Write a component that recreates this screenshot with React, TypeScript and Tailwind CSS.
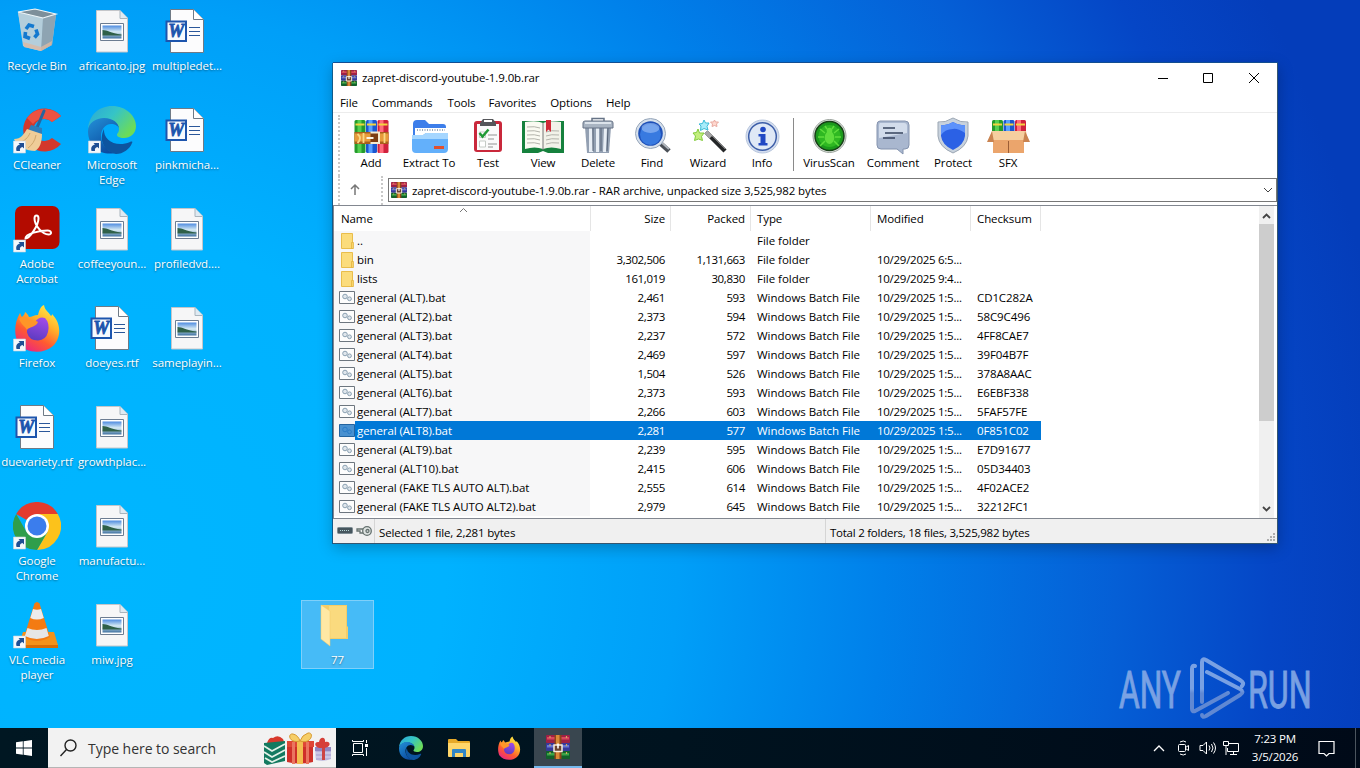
import type { ReactNode } from "react";

const files = [
  ["general (ALT).bat", "2,461", "593", "CD1C282A"],
  ["general (ALT2).bat", "2,373", "594", "58C9C496"],
  ["general (ALT3).bat", "2,237", "572", "4FF8CAE7"],
  ["general (ALT4).bat", "2,469", "597", "39F04B7F"],
  ["general (ALT5).bat", "1,504", "526", "378A8AAC"],
  ["general (ALT6).bat", "2,373", "593", "E6EBF338"],
  ["general (ALT7).bat", "2,266", "603", "5FAF57FE"],
  ["general (ALT8).bat", "2,281", "577", "0F851C02"],
  ["general (ALT9).bat", "2,239", "595", "E7D91677"],
  ["general (ALT10).bat", "2,415", "606", "05D34403"],
  ["general (FAKE TLS AUTO ALT).bat", "2,555", "614", "4F02ACE2"],
  ["general (FAKE TLS AUTO ALT2).bat", "2,979", "645", "32212FC1"],
];

const rows = [
  { name: "..", size: "", packed: "", type: "File folder", modified: "", sum: "" },
  { name: "bin", size: "3,302,506", packed: "1,131,663", type: "File folder", modified: "10/29/2025 6:5...", sum: "" },
  { name: "lists", size: "161,019", packed: "30,830", type: "File folder", modified: "10/29/2025 9:4...", sum: "" },
  ...files.map(([name, size, packed, sum]) => ({
    name, size, packed, type: "Windows Batch File", modified: "10/29/2025 1:5...", sum,
  })),
];

/* ---------- desktop icons ---------- */

function Shortcut() {
  return (
    <g>
      <path d="M.5 35h12v12H.5z" fill="#f4f8fb" stroke="#c9d5de" strokeWidth=".6" />
      <path d="M3.500 45c-1-4 1-6 3.500-6.500L5.500 37H11v5.500L9.500 41c-2 .5-3 1.500-2.500 4z" fill="#1f4f94" />
    </g>
  );
}

function RecycleIcon() {
  return (
    <svg width="48" height="48" viewBox="0 0 48 48">
      <path d="M5 5l17-3 21 5-4 31-11 6-17-4z" fill="#b9cfda" opacity=".9" />
      <path d="M5 5l25 6-2 33-18-5z" fill="#b4cedb" />
      <path d="M30 11l13-4-4 31-11 6z" fill="#8ea4b2" />
      <path d="M5 5l17-3 21 5-13 4z" fill="#7d8f9a" stroke="#eef6f9" strokeWidth="1.200" />
      <path d="M10 35l18 5 11-6-.5 4-10.500 6-17-4z" fill="#dcb9a2" opacity=".8" />
      <g fill="none" stroke="#1479cf" strokeWidth="3.600">
        <path d="M13 22l3-4 5 1.500" />
        <path d="M23 22.500l1.500 4.500-3 3.500" />
        <path d="M17 31.500l-5-2 .5-4.500" />
      </g>
    </svg>
  );
}

function CCleanerIcon() {
  return (
    <svg width="48" height="48" viewBox="0 0 48 48">
      <path d="M48 10A21.500 21.500 0 1 0 48 38l-9-6a11 11 0 1 1 0-16z" fill="#d3382b" />
      <path d="M48 10A22 22 0 0 0 14 12l6 6c6-7 14-6 19-2z" fill="#ec5242" />
      <path d="M31 5l-8 19" stroke="#27659f" strokeWidth="3" strokeLinecap="round" />
      <path d="M18 19l11 3v7l-14-4z" fill="#2e7dbb" />
      <path d="M14 23l15 5c0 8-2 14-7 17-8 0-18-4-21-12 7 0 10-5 13-10z" fill="#efcd98" />
      <path d="M17 27c-2 5-6 8-9 9M23 29c-1 6-4 10-8 13" stroke="#d0a86d" fill="none" />
      <Shortcut />
    </svg>
  );
}

function EdgeLogo({ size }: { size: number }) {
  return (
    <svg width={size} height={size} viewBox="0 0 48 48">
      <defs>
        <linearGradient id="edgeTop" x1="0" y1="0" x2="1" y2=".6">
          <stop offset="0" stopColor="#2ba6d8" />
          <stop offset=".5" stopColor="#35c4c7" />
          <stop offset="1" stopColor="#6ddc57" />
        </linearGradient>
        <linearGradient id="edgeBody" x1="0" y1="0" x2=".6" y2="1">
          <stop offset="0" stopColor="#2391d8" />
          <stop offset="1" stopColor="#0b4a9f" />
        </linearGradient>
      </defs>
      <path d="M0 23C1 9 11 0 24 0c14 0 24 10 24 20 0 8-6 12-12 12-5 0-7-2-7-3 0-2 2-2 2-6 0-5-6-10-14-10C8 13 2 17 0 23z" fill="url(#edgeTop)" />
      <path d="M0 25c0-8 8-13 16-13 9 0 15 5 15 11 0-3-4-5-8-5-6 0-10 6-10 12 0 9 7 16 14 17C13 50 0 41 0 25z" fill="url(#edgeBody)" />
      <path d="M16 23c-6 12 1 23 12 25 7 0 14-5 16-11 1-1 0-2-2-1-14 6-27-2-26-13z" fill="#0d549f" />
    </svg>
  );
}

function EdgeIcon() {
  return (
    <div className="grid">
      <div className="col-start-1 row-start-1"><EdgeLogo size={48} /></div>
      <svg className="col-start-1 row-start-1" width="48" height="48"><Shortcut /></svg>
    </div>
  );
}

function AcrobatIcon() {
  return (
    <svg width="48" height="48" viewBox="0 0 48 48">
      <rect x="2" y="1" width="44.500" height="43" rx="7" fill="#b30b00" />
      <path d="M12.500 33.500c4 0 13-13 13-20 0-4-4-4-4 0 0 7 8 16 14 16 4 0 3-4-1-4-7 0-22.500 3-22 8z" fill="none" stroke="#fff" strokeWidth="2" />
      <Shortcut />
    </svg>
  );
}

function FirefoxLogo({ size }: { size: number }) {
  return (
    <svg width={size} height={size} viewBox="0 0 48 48">
      <defs>
        <linearGradient id="ffBody" x1=".8" y1="0" x2=".2" y2="1">
          <stop offset="0" stopColor="#fff04a" />
          <stop offset=".35" stopColor="#ffb02a" />
          <stop offset=".65" stopColor="#ff5a30" />
          <stop offset="1" stopColor="#e8208a" />
        </linearGradient>
        <linearGradient id="ffGlobe" x1=".6" y1="0" x2=".3" y2="1">
          <stop offset="0" stopColor="#a04be8" />
          <stop offset="1" stopColor="#5b3bc0" />
        </linearGradient>
      </defs>
      <path d="M7 9c1 2 1 3 2 4 1-1 3-3 3-5 2 1 3 3 4 5 3 0 5-2 9-2 1-5 3-9 6-10 1 6 5 7 7 11 1-1 1-1 1-2 10 10 9 24 1 32-10 9-28 7-35-3C1 31 1 19 7 9z" fill="url(#ffBody)" />
      <path d="M14 22l8-4q4-6 10-4 5 5 3 14-2 8-10 8.500-9 0-11-8z" fill="url(#ffGlobe)" />
      <path d="M6 15c5-4 8-1 11 2 3-1 7 0 8 1-1 3-4 4-6 5-2 1-4 1-5 3-1-3-5-4-8-11z" fill="#ff9627" />
    </svg>
  );
}

function FirefoxIcon() {
  return (
    <div className="grid">
      <div className="col-start-1 row-start-1"><FirefoxLogo size={48} /></div>
      <svg className="col-start-1 row-start-1" width="48" height="48"><Shortcut /></svg>
    </div>
  );
}

function ChromeIcon() {
  return (
    <svg width="48" height="48" viewBox="0 0 48 48">
      <path d="M24 24L3.200 12A24 24 0 0 1 44.800 12z" fill="#e33b2e" />
      <path d="M24 24V12h20.800A24 24 0 0 1 24 48l10.400-18z" fill="#fcc21b" />
      <path d="M24 24l10.400 6L24 48A24 24 0 0 1 3.200 12l10.400 18z" fill="#2f9e4b" />
      <circle cx="24" cy="24" r="12" fill="#fff" />
      <circle cx="24" cy="24" r="9.500" fill="#3b7ded" />
      <Shortcut />
    </svg>
  );
}

function VlcIcon() {
  return (
    <svg width="48" height="48" viewBox="0 0 48 48">
      <path d="M10 31h31l4 13v3H6v-3z" fill="#f4921a" />
      <path d="M6 44h39v3H6z" fill="#d96d05" />
      <path d="M21.500 2.500q2.500-3 5 0L37 36q-13 8-26 0z" fill="#f47b12" />
      <path d="M20 8q4 1.500 8 0l2.800 9q-7 3-13.500 0z" fill="#ececec" />
      <path d="M14.500 27q9.500 4 19 0l2.300 8q-12 6-24 0z" fill="#e6e6e6" />
      <Shortcut />
    </svg>
  );
}

function WordIcon() {
  return (
    <svg width="48" height="48" viewBox="0 0 48 48">
      <path d="M7.500 2.500h23l10 10v33h-33z" fill="#fcfcfd" stroke="#6f7a86" />
      <path d="M30.500 2.500v10h10" fill="#fff" stroke="#6f7a86" />
      <path d="M26 20.500h11M26 24.500h11M26 28.500h11" stroke="#2b579a" />
      <rect x="2.500" y="13.500" width="21.500" height="21.500" fill="#1d55ad" />
      <rect x="4.500" y="15.500" width="17.500" height="17.500" fill="#f7fafe" />
      <text x="13.200" y="30" textAnchor="middle" fontFamily="Liberation Serif, serif" fontWeight="700" fontStyle="italic" fontSize="18" fill="#1d55ad" stroke="#1d55ad" strokeWidth=".8">W</text>
    </svg>
  );
}

function ImageIcon() {
  return (
    <svg width="48" height="48" viewBox="0 0 48 48">
      <defs>
        <linearGradient id="photoSky" x1="0" y1="0" x2="0" y2="1">
          <stop offset="0" stopColor="#4d8be0" />
          <stop offset=".5" stopColor="#d8ecf4" />
          <stop offset="1" stopColor="#3d70a0" />
        </linearGradient>
      </defs>
      <path d="M8.500 3.500H32l7.500 7.500v34h-31z" fill="#f6f6f7" stroke="#c4c6ca" />
      <path d="M32 3.500v8h7.500" fill="#dfeaf2" stroke="#a9b4bd" />
      <path d="M12.500 16.500h23v17h-23z" fill="#fff" stroke="#6c7c91" />
      <path d="M14.500 18.500h19v13h-19z" fill="url(#photoSky)" />
      <path d="M14.500 23c5 0 8 3 19 4.500v1h-19z" fill="#2f6048" />
    </svg>
  );
}

function DesktopItem({ icon, label }: { icon: ReactNode; label: string }) {
  return (
    <div className="flex h-[99px] w-[75px] flex-col items-center pt-[7px]">
      <div className="h-[51px]">{icon}</div>
      <div className="w-[76px] pl-px text-center leading-[15px] tracking-[-0.05px] whitespace-pre text-white [text-shadow:0_1px_2px_rgba(0,0,0,.45)]">{label}</div>
    </div>
  );
}

/* ---------- archiver icons ---------- */

function RarIcon({ size }: { size: number }) {
  return (
    <svg width={size} height={size} viewBox="0 0 24 24">
      <rect x="0" y="0" width="24" height="8" rx="1" fill="#9e2145" />
      <rect x="1" y="2" width="22" height="2.500" fill="#d8485e" />
      <rect x="0" y="8" width="24" height="8" rx="1" fill="#37399a" />
      <rect x="1" y="10" width="22" height="2.500" fill="#6878d4" />
      <rect x="0" y="16" width="24" height="8" rx="1" fill="#12612b" />
      <rect x="1" y="18" width="22" height="2.500" fill="#3ba548" />
      <path d="M4 1v22M20.500 1v22" stroke="#d3a85c" strokeWidth="1.200" strokeDasharray="2 6" />
      <rect x="8.500" y="0" width="7" height="24" fill="#8f4519" />
      <rect x="10" y="0" width="3.500" height="24" fill="#d98a38" />
      <path d="M8 10h8v6.500H8z" fill="#6b4330" stroke="#f6ecdc" strokeWidth="1.500" />
      <path d="M12 8.500v5" stroke="#fff" strokeWidth="1.600" />
    </svg>
  );
}

function Books({ h }: { h: number }) {
  return (
    <g>
      <rect x="0" y="0" width="11" height={h} rx="1.500" fill="#249b2c" />
      <rect x="3" y="0" width="4" height={h} fill="#54cf50" />
      <rect x="11.500" y="0" width="11" height={h} rx="1.500" fill="#1b57cf" />
      <rect x="14" y="0" width="4" height={h} fill="#58a0ff" />
      <rect x="23" y="0" width="11" height={h} rx="1.500" fill="#d0213d" />
      <rect x="25" y="0" width="4" height={h} fill="#ff6b7c" />
      <path d="M1 4.500h9M12.500 4.500h9M24 4.500h9" stroke="#f3d33f" strokeWidth="1.800" />
    </g>
  );
}

const tools: { label: string; width: string; art: ReactNode }[] = [
  {
    label: "Add", width: "w-[50px]",
    art: (
      <g transform="translate(1.500 2)">
        <Books h={33} />
        <path d="M0 12h34v12H0z" fill="#a9601c" />
        <path d="M0 13.500h34v8H0z" fill="#e79b3a" />
        <path d="M3 14q5 4 0 9M9 13v10M30 13v10" stroke="#f9d985" strokeWidth="1.800" fill="none" />
        <path d="M16 12.500h8.500v10.500H16" fill="#7d3c12" stroke="#f6ead0" strokeWidth="2" />
        <path d="M12 18h7" stroke="#f9f5e9" strokeWidth="2" />
      </g>
    ),
  },
  {
    label: "Extract To", width: "w-[66px]",
    art: (
      <g transform="translate(1 0)">
        <path d="M1 6q0-4 4-4h8l4 4h14q3 0 3 3v10H1z" fill="#3d7eea" />
        <path d="M3 10h31v10H3z" fill="#fff" />
        <path d="M5 12h28" stroke="#9aa9bd" strokeDasharray="1 1.500" strokeWidth="2" />
        <path d="M0 17h11l3-2h22v16q0 4-4 4H4q-4 0-4-4z" fill="#63b0fb" />
        <path d="M0 17h11l3-2h22v6H0z" fill="#a5d6ff" />
        <rect x="22" y="28" width="10" height="3" fill="#e0502e" />
      </g>
    ),
  },
  {
    label: "Test", width: "w-[52px]",
    art: (
      <g>
        <rect x="4" y="3" width="28" height="31" rx="3" fill="#c9283b" />
        <path d="M7 6h22v26H7z" fill="#fafafa" />
        <path d="M10 5l3-4h10l3 4v3H10z" fill="#55565a" />
        <path d="M14 3h8" stroke="#fff" strokeWidth="2" />
        <path d="M9.500 14h6v5.500h-6zM9.500 23h6v6h-6z" fill="#fff" stroke="#c5cbc6" />
        <path d="M9.500 15l3 3.500 6-7" fill="none" stroke="#209a36" strokeWidth="2.500" />
        <path d="M18 17h9M18 21h6M18 26h9M18 29h5" stroke="#929292" />
      </g>
    ),
  },
  {
    label: "View", width: "w-[58px]",
    art: (
      <g>
        <path d="M-3 3h42v32H23l-5-2-5 2H-3z" fill="#16813d" />
        <path d="M0 4q12-2 18 1v26q-8-3-18 0z" fill="#fafaf2" />
        <path d="M36 4q-12-2-18 1v26q8-3 18 0z" fill="#f2f2e9" />
        <path d="M2 9q8-1 13 1M2 13q8-1 13 1M2 17q8-1 13 1M2 21q8-1 13 1M2 25q8-1 13 1M21 14q5-2 13-1M21 18q5-2 13-1M21 22q5-2 13-1M21 26q5-2 13-1" fill="none" stroke="#b3b3ab" />
        <path d="M18 5v27" stroke="#777" />
        <path d="M21 2h5v12l-2.500-2.500L21 14z" fill="#d02936" />
      </g>
    ),
  },
  {
    label: "Delete", width: "w-[52px]",
    art: (
      <g>
        <path d="M5 9h26l-2 26H7z" fill="#93a0b2" />
        <path d="M9 10h3l1 24H9zM16 10h3v24h-3zM24 10h3l-1 24h-3z" fill="#e8eef5" />
        <path d="M13 10v23M21 10v23M28 10l-1 23" stroke="#566377" />
        <path d="M3 5q0-2 2-2h26q2 0 2 2v5H3z" fill="#a9b4c2" stroke="#667386" />
        <path d="M5 5h26" stroke="#eef3f8" strokeWidth="1.500" />
        <path d="M12 3V.500h12V3" fill="none" stroke="#667386" strokeWidth="1.500" />
      </g>
    ),
  },
  {
    label: "Find", width: "w-[56px]",
    art: (
      <g>
        <path d="M26 25l9 8" stroke="#4a4f56" strokeWidth="5" />
        <path d="M27 24l8 7" stroke="#aeb4bb" strokeWidth="2" />
        <circle cx="16.500" cy="15.500" r="15" fill="#d6e0ec" stroke="#99a8bb" />
        <circle cx="16.500" cy="15.500" r="12.300" fill="#1e50b8" />
        <circle cx="16.500" cy="16.500" r="10.500" fill="#387ae0" />
        <ellipse cx="16.500" cy="10" rx="9" ry="5" fill="#91b8f3" opacity=".7" />
      </g>
    ),
  },
  {
    label: "Wizard", width: "w-[56px]",
    art: (
      <g>
        <path d="M16 14l19 19" stroke="#242628" strokeWidth="4.500" />
        <path d="M16 14l5 5" stroke="#a6a6a6" strokeWidth="4.500" />
        <path d="M22 18l13 13" stroke="#777" />
        <path d="M14 2l1.500 3 3.500 0-2 3.500 1 3.500-4-1.500-3.500 2 .5-4.500L9 6l3.500-.5z" fill="#a8ecfa" stroke="#3bbbd6" />
        <path d="M8 11l1.500 4H14l-2.500 3.500 1 4-4-1.500-4 1.500 1-4.500L3 15l3.500-.5z" fill="#c2ee7d" stroke="#82cb3c" />
        <path d="M24.500 2l1 2h3l-2 2 .5 2.500-2.500-1-2.500 1L22.500 6l-2-2h3z" fill="#ffd8cf" stroke="#e8a99f" />
      </g>
    ),
  },
  {
    label: "Info", width: "w-[52px]",
    art: (
      <g transform="translate(.5 0)">
        <circle cx="18" cy="18.500" r="16.500" fill="#d3ddef" stroke="#b8c6dd" />
        <circle cx="18" cy="18.500" r="13.800" fill="#dfe8f6" stroke="#3d5ea8" strokeWidth="1.500" />
        <circle cx="18.500" cy="11.500" r="2.800" fill="#2148c4" />
        <path d="M14 16h7v9h2v2.500h-9V25h2v-6.500h-2z" fill="#2148c4" />
      </g>
    ),
  },
];

const extraTools: typeof tools = [
  {
    label: "VirusScan", width: "w-[58px]",
    art: (
      <g>
        <circle cx="18.500" cy="18" r="16.500" fill="#e1e6e1" stroke="#9ba39c" />
        <circle cx="18.500" cy="18" r="14.500" fill="#1c9a1c" stroke="#183f18" strokeWidth="1.500" />
        <circle cx="18.500" cy="18" r="11" fill="#2fb822" />
        <g stroke="#5fdc3d" strokeWidth="1.500" fill="none">
          <path d="M14 15l-5-4M23 15l5-4M13 19H7M24 19h6M14 23l-5 5M23 23l5 5M16 11l-2-3M21 11l2-3" />
        </g>
        <ellipse cx="18.500" cy="19.500" rx="4.800" ry="6.500" fill="#5fdc3d" />
        <circle cx="18.500" cy="12.500" r="2.800" fill="#5fdc3d" />
      </g>
    ),
  },
  {
    label: "Comment", width: "w-[70px]",
    art: (
      <g>
        <path d="M5 3h25q4 0 4 4v20q0 4-4 4h-2v5l-6-5H6q-4 0-4-4V7q0-4 3-4z" fill="#a9b7cf" stroke="#8493ae" />
        <path d="M5 5h24q3 0 3 3v7L4 20V8q0-3 1-3z" fill="#d2dceb" />
        <path d="M8 10h12M10 15h18M8 20h12" stroke="#36435d" strokeWidth="1.700" />
      </g>
    ),
  },
  {
    label: "Protect", width: "w-[50px]",
    art: (
      <g>
        <path d="M18 0q8 5 15 4v14q-1 11-15 17Q4 29 3 18V4q7 1 15-4z" fill="#c8d2dd" stroke="#9ba6b3" />
        <path d="M18 4q6 4 12 3v11q-1 9-12 14Q7 27 6 18V7q6 1 12-3z" fill="#2b61e5" />
        <path d="M18 4q6 4 12 3v8q-8-5-12-4-8 0-12 6V7q6 1 12-3z" fill="#5d92fb" />
      </g>
    ),
  },
  {
    label: "SFX", width: "w-[60px]",
    art: (
      <g>
        <g transform="translate(2 2)"><Books h={15} /></g>
        <path d="M3 17h31v18H3z" fill="#eba56c" />
        <path d="M2 13h34l2 9H0z" fill="#f5cf9f" />
        <path d="M-3 24l5-11 2 11zM40 24l-5-11-2 11z" fill="#c98350" />
        <path d="M18.500 23v12" stroke="#9c5d35" />
      </g>
    ),
  },
];

function Tool({ label, width, art }: { label: string; width: string; art: ReactNode }) {
  return (
    <div className={`flex ${width} shrink-0 flex-col items-center`}>
      <svg width="36" height="36" viewBox="0 0 36 36" className="overflow-visible">{art}</svg>
      <span className="mt-px leading-4 whitespace-nowrap">{label}</span>
    </div>
  );
}

function FolderSmall() {
  return (
    <svg width="16" height="18" viewBox="0 0 16 18">
      <path d="M2.500 1.500h11v15h-11z" fill="#fbdc7c" stroke="#e9bd4b" />
      <path d="M12.500 10.500h2v6h-2z" fill="#f9d467" stroke="#dfb03c" strokeWidth=".7" />
    </svg>
  );
}

function BatSmall({ selected }: { selected: boolean }) {
  return (
    <svg width="16" height="16" viewBox="0 0 16 16">
      <path d="M.5 1.500h15v12H.5z" fill={selected ? "#4a91d0" : "#fdfdfd"} stroke={selected ? "#23639f" : "#6d767f"} />
      <g fill={selected ? "none" : "#dfe6ec"} stroke={selected ? "#2a7cc9" : "#8ba1b2"}>
        <circle cx="6" cy="6.500" r="2.300" />
        <circle cx="10.500" cy="8.800" r="1.900" />
      </g>
    </svg>
  );
}

function ArchiveWindow() {
  return (
    <div className="absolute top-[63px] left-[333px] flex h-[481px] w-[945px] flex-col border-r border-b border-[#35566f] bg-white text-black shadow-[0_4px_14px_rgba(0,0,0,.25),0_-1px_0_#14539c,-1px_0_0_#14679c]">
      <div className="flex h-[29px] shrink-0 items-center pl-2">
        <RarIcon size={16} />
        <span className="ml-[5px] grow">zapret-discord-youtube-1.9.0b.rar</span>
        <div className="mr-[17px] flex w-[103px] items-center">
          <svg width="12" height="12"><path d="M1 6.500h10" stroke="#000" /></svg>
          <svg className="ml-[33px]" width="12" height="12"><path d="M1.500 1.500h9v9h-9z" fill="none" stroke="#000" /></svg>
          <svg className="ml-auto" width="12" height="12"><path d="M1 1l10 10M11 1L1 11" stroke="#000" /></svg>
        </div>
      </div>
      <div className="flex h-[21px] shrink-0 items-center gap-[14px] border-b border-[#ececec] pt-px pl-[7px]">
        <span>File</span>
        <span className="mr-px">Commands</span>
        <span className="-mr-px">Tools</span>
        <span>Favorites</span>
        <span>Options</span>
        <span>Help</span>
      </div>
      <div className="flex h-[63px] shrink-0 pt-[5px] pl-[5px]">
        <div className="-mt-[3px] w-[8px] border-l-2 border-dotted border-[#c8c8c8]" />
        {tools.map(t => <Tool key={t.label} {...t} />)}
        <div className="mr-[6px] ml-[5px] h-[53px] w-px bg-[#8a8a8a]" />
        {extraTools.map(t => <Tool key={t.label} {...t} />)}
      </div>
      <div className="flex h-[29px] shrink-0 pl-[5px]">
        <div className="w-[11px] border-l-2 border-dotted border-[#c8c8c8]" />
        <svg className="mt-[7px]" width="12" height="14" fill="none" stroke="#777" strokeWidth="1.500"><path d="M6 12V2M2 6l4-4 4 4" /></svg>
        <div className="ml-5 w-[7px] border-l-2 border-dotted border-[#c8c8c8]" />
        <div className="mt-[2px] flex h-[24px] grow items-center border border-[#777] pl-[2px]">
          <RarIcon size={16} />
          <span className="mt-px ml-[5px] grow">zapret-discord-youtube-1.9.0b.rar - RAR archive, unpacked size 3,525,982 bytes</span>
          <svg className="mr-[3px]" width="10" height="8" fill="none" stroke="#444"><path d="M1 2l4 4 4-4" /></svg>
        </div>
      </div>

      <div className="flex h-[314px] shrink-0 border-t border-b border-l border-[#828790] pr-[3px]">
        <div className="w-[707px]">
          <div className="flex h-[25px] items-center">
            <div className="relative w-[256px] pl-[7px]">
              Name
              <svg className="absolute -top-[3px] left-[125px]" width="9" height="6" fill="none" stroke="#777"><path d="M1 5l3.500-3.500L8 5" /></svg>
            </div>
            <div className="flex h-full w-[81px] items-center justify-end border-r border-l border-[#e5e5e5] pr-[5px]">Size</div>
            <div className="flex h-full w-[80px] items-center justify-end border-r border-[#e5e5e5] pr-[5px]">Packed</div>
            <div className="flex h-full w-[120px] items-center border-r border-[#e5e5e5] pl-[6px]">Type</div>
            <div className="flex h-full w-[100px] items-center border-r border-[#e5e5e5] pl-[6px]">Modified</div>
            <div className="flex h-full w-[70px] items-center border-r border-[#e5e5e5] pl-[6px]">Checksum</div>
          </div>
          {rows.map(r => {
            const selected = r.name === "general (ALT8).bat";
            return (
              <div key={r.name} className={`flex h-[19px] items-center whitespace-nowrap ${selected ? "text-white" : ""}`}>
                <div className="flex h-full w-[256px] items-center bg-[#f7f7f8] pl-[5px]">
                  {r.type === "File folder" ? <FolderSmall /> : <BatSmall selected={selected} />}
                  <div className={`flex h-full grow items-center pl-[2px] ${selected ? "bg-[#0078d7]" : ""}`}>{r.name}</div>
                </div>
                <div className={`flex h-full w-[451px] items-center ${selected ? "bg-[#0078d7]" : ""}`}>
                  <span className="w-[75px] text-right tracking-[-0.38px]">{r.size}</span>
                  <span className="w-[80px] text-right tracking-[-0.38px]">{r.packed}</span>
                  <span className="w-[120px] pl-[12px] tracking-[-0.03px]">{r.type}</span>
                  <span className="w-[100px] pl-[12px] tracking-[-0.27px]">{r.modified}</span>
                  <span className="pl-[12px]">{r.sum}</span>
                </div>
              </div>
            );
          })}
        </div>
        <div className="ml-auto flex w-[15px] flex-col bg-[#f0f0f0] pt-[1px]">
          <svg width="15" height="17" fill="none" stroke="#444" strokeWidth="1.800"><path d="M4 11l3.500-3.500L11 11" /></svg>
          <div className="h-[197px] bg-[#cdcdcd]" />
          <svg className="mt-auto" width="15" height="17" fill="none" stroke="#444" strokeWidth="1.800"><path d="M4 6l3.500 3.500L11 6" /></svg>
        </div>
      </div>

      <div className="flex grow items-center bg-[#f0f0f0] tracking-[-0.17px]">
        <div className="flex h-full w-[42px] items-center gap-[3px] border-r border-[#d5d5d5] pl-1">
          <svg width="16" height="8"><rect x=".5" y=".5" width="15" height="6" rx="1" fill="#45555d" stroke="#7c8b92" /><path d="M3 3.500h9" stroke="#b6d4d4" strokeDasharray="1 1" /></svg>
          <svg width="16" height="12" fill="none" stroke="#65716f" strokeWidth="1.300"><circle cx="11" cy="6" r="4.300" fill="#dfe4e2" /><circle cx="11.500" cy="6" r="1.500" /><path d="M7 4H1v2h3v2h3" /></svg>
        </div>
        <div className="flex h-full w-[451px] items-center border-r border-[#d5d5d5] pt-[3px] pl-[4px]">Selected 1 file, 2,281 bytes</div>
        <div className="grow pt-[3px] pl-[4px] tracking-[-0.25px]">Total 2 folders, 18 files, 3,525,982 bytes</div>
        <svg className="self-end" width="12" height="12" fill="#adadad"><path d="M8 2h2v2H8zM8 5h2v2H8zM5 5h2v2H5zM8 8h2v2H8zM5 8h2v2H5zM2 8h2v2H2z" /></svg>
      </div>
    </div>
  );
}

function Watermark() {
  return (
    <svg className="absolute top-[654px] left-[1112px]" width="220" height="74" viewBox="-4 0 220 74">
      <defs>
        <linearGradient id="mark" x1="0" y1="0" x2="0" y2="70" gradientUnits="userSpaceOnUse">
          <stop offset=".5" stopColor="#86aae6" />
          <stop offset=".56" stopColor="#6a8fd4" />
        </linearGradient>
      </defs>
      <g fill="url(#mark)" stroke="url(#mark)" strokeWidth="1" fontFamily="Roboto, sans-serif" fontSize="52" opacity=".9">
        <text transform="translate(3 53.500) scale(.61 1)">ANY</text>
        <text transform="translate(132 53.500) scale(.62 1)">RUN</text>
      </g>
      <g fill="none" stroke="url(#mark)" strokeWidth="4" strokeLinejoin="round" strokeLinecap="round" opacity=".9">
        <path d="M79 12q-3-1-3 3v40q0 3 3 2l33-18" />
        <path d="M86 48V8q0-4 4-2l34 20q5 3 2 6" />
        <path d="M91 18l33 17q5 3 0 6L90 62q-4 2-4-1" />
      </g>
    </svg>
  );
}

function Gifts() {
  return (
    <svg width="70" height="34" viewBox="0 0 70 34">
      <path d="M4 11q2-6 6-5 5-4 10 1l2 5z" fill="#d8392c" />
      <path d="M1 11l21-2v20l-18 4-3-2z" fill="#137a60" />
      <path d="M1 14l8 5 13-7M1 20l8 5 13-7M2 26l7 4 13-6" fill="none" stroke="#e3f2e8" strokeWidth="1.800" />
      <path d="M24 10h26v20q-13 3-26 0z" fill="#cf3029" />
      <path d="M24 9h27v6H24z" fill="#df4635" />
      <path d="M29 10h3v22h-3zM43 10h3v22h-3z" fill="#ea7560" />
      <path d="M34 9h6v23h-6z" fill="#f3bd51" />
      <path d="M37 9C26 12 24 1 30 2q5 1 7 7 2-6 8-8c7-1 3 12-8 8z" fill="#f6ce67" stroke="#d79a31" />
      <path d="M52 15h16v12q-7 3-15 1z" fill="#b8b1da" />
      <path d="M52 15h16v4H52z" fill="#9285bf" />
      <path d="M52 21h16M52 25h16" stroke="#dcdcf0" />
      <path d="M59 15h3v13h-3z" fill="#cc4444" />
      <path d="M60 16c-9 1-10-7-4-6 1-6 7-5 6 0 6-2 7 6-2 6z" fill="#d63f38" />
    </svg>
  );
}

function Taskbar() {
  return (
    <div className="flex h-[40px] items-center bg-linear-to-r from-[#001722] via-[#00131f] to-[#000a18] text-white">
      <div className="flex w-[48px] justify-center">
        <svg width="16" height="16" fill="#fff"><path d="M0 2.200L6.800 1.300v6.300H0zM7.600 1.200L16 0v7.600H7.600zM0 8.400h6.800v6.300L0 13.800zM7.600 8.400H16V16l-8.400-1.200z" /></svg>
      </div>
      <div className="flex h-full w-[288px] items-center border-b border-[#b5b5b5] bg-[#f2f2f2] pl-[12px] text-[#333]">
        <svg width="17" height="18" fill="none" stroke="#222" strokeWidth="1.400"><circle cx="10.500" cy="6.500" r="5.500" /><path d="M6.500 10.500L.5 17" /></svg>
        <span className="mt-[2px] ml-[11px] grow text-[14px] tracking-[-0.04px]">Type here to search</span>
        <div className="mt-[2px] mr-[3px]"><Gifts /></div>
      </div>
      <div className="flex w-[48px] justify-center">
        <svg width="18" height="16" fill="none" stroke="#fff"><path d="M2.500 3.500h9v9h-9zM1.500 0v1.500h11V0M1.500 16v-1.500h11V16M15.500 0v3M15.500 8v8" /><path d="M14 4h3v3h-3z" fill="#fff" stroke="none" /></svg>
      </div>
      <div className="ml-[15px] w-[49px]"><EdgeLogo size={24} /></div>
      <svg className="w-[22px]" height="20" viewBox="0 0 22 20">
        <path d="M0 2q0-1 1-1h7l2 2h11q1 0 1 1v14H0z" fill="#e7a928" />
        <path d="M0 5h22v13q0 1-1 1H1q-1 0-1-1z" fill="#ffd66a" />
        <path d="M4 19v-7q0-1 1-1h12q1 0 1 1v7h-3v-4H7v4z" fill="#3286c6" />
      </svg>
      <div className="ml-[27px] w-[37px]"><FirefoxLogo size={24} /></div>
      <div className="flex h-full w-[48px] items-center justify-center border-b-2 border-[#76b9ed] bg-[#39464f]"><RarIcon size={24} /></div>
      <div className="ml-auto flex items-center">
        <svg width="12" height="8" fill="none" stroke="#fff" strokeWidth="1.300"><path d="M1 7l5-5 5 5" /></svg>
        <svg className="ml-[12px]" width="13" height="16" fill="none" stroke="#fff"><rect x="1.500" y="4.500" width="7" height="7" rx="1" /><path d="M8.500 7.500l3-2v5l-3-2M3 2q3.500-2 6 0M3 14q3.500 2 6 0" /></svg>
        <svg className="ml-[9px]" width="18" height="16" fill="none" stroke="#fff"><path d="M1 5.500h3l3.500-3.500v12L4 10.500H1zM10 5.500q2 2.500 0 5M12.500 4q3 4 0 8M14.500 2.500q4 5.500 0 11" /></svg>
        <svg className="ml-[6px]" width="17" height="15" fill="none" stroke="#fff"><path d="M6 2.500h9.500v8H4.500V7M7 13.500h7M10.500 10.500v3M.5.500h5v4h-5zM3 5v9" /></svg>
        <div className="ml-[8px] w-[54px] text-center leading-[18px] tracking-[-0.2px]">
          <div>7:23 PM</div>
          <div>3/5/2026</div>
        </div>
        <svg className="ml-[16px]" width="17" height="17" fill="none" stroke="#fff" strokeWidth="1.200"><path d="M1 1.500h15v12h-5L8.500 16 6 13.500H1z" /></svg>
        <div className="ml-[20px] h-[40px] w-[5px] border-l border-[#4b555e]" />
      </div>
    </div>
  );
}

export default function App() {
  return (
    <div className="relative flex h-[768px] w-[1360px] flex-col overflow-hidden bg-[radial-gradient(ellipse_1290px_1280px_at_110px_570px,#00b6ff_0%,#00b2ff_26%,#009ff8_44%,#0080ea_60%,#055fd6_78%,#0546c6_90%,#043dba_100%)] font-['Open_Sans','Noto_Sans',sans-serif] text-[11.500px] tracking-[-0.1px]">
      <div className="-ml-px flex h-[728px]">
        <div>
          <DesktopItem icon={<RecycleIcon />} label="Recycle Bin" />
          <DesktopItem icon={<CCleanerIcon />} label="CCleaner" />
          <DesktopItem icon={<AcrobatIcon />} label={"Adobe\nAcrobat"} />
          <DesktopItem icon={<FirefoxIcon />} label="Firefox" />
          <DesktopItem icon={<WordIcon />} label="duevariety.rtf" />
          <DesktopItem icon={<ChromeIcon />} label={"Google\nChrome"} />
          <DesktopItem icon={<VlcIcon />} label={"VLC media\nplayer"} />
        </div>
        <div>
          <DesktopItem icon={<ImageIcon />} label="africanto.jpg" />
          <DesktopItem icon={<EdgeIcon />} label={"Microsoft\nEdge"} />
          <DesktopItem icon={<ImageIcon />} label="coffeeyoun..." />
          <DesktopItem icon={<WordIcon />} label="doeyes.rtf" />
          <DesktopItem icon={<ImageIcon />} label="growthplac..." />
          <DesktopItem icon={<ImageIcon />} label="manufactu..." />
          <DesktopItem icon={<ImageIcon />} label="miw.jpg" />
        </div>
        <div>
          <DesktopItem icon={<WordIcon />} label="multipledet..." />
          <DesktopItem icon={<WordIcon />} label="pinkmicha..." />
          <DesktopItem icon={<ImageIcon />} label="profiledvd...." />
          <DesktopItem icon={<ImageIcon />} label="sameplayin..." />
        </div>
      </div>

      <div className="absolute top-[600px] left-[301px] flex h-[69px] w-[73px] flex-col items-center border border-[#7fd0fa] bg-[#46bbf7] text-white">
        <svg width="48" height="51" viewBox="1 1 48 51">
          <path d="M8 5h26v21l1 1v12H8z" fill="#f5cd68" />
          <path d="M16 6h17v32H16z" fill="#fada7e" />
          <path d="M8 5l9 6v35l-9-7z" fill="#ffe8a4" stroke="#f0c96b" strokeWidth=".5" />
        </svg>
        <span className="leading-[15px] [text-shadow:0_1px_2px_rgba(0,0,0,.45)]">77</span>
      </div>

      <ArchiveWindow />
      <Watermark />
      <Taskbar />
    </div>
  );
}
